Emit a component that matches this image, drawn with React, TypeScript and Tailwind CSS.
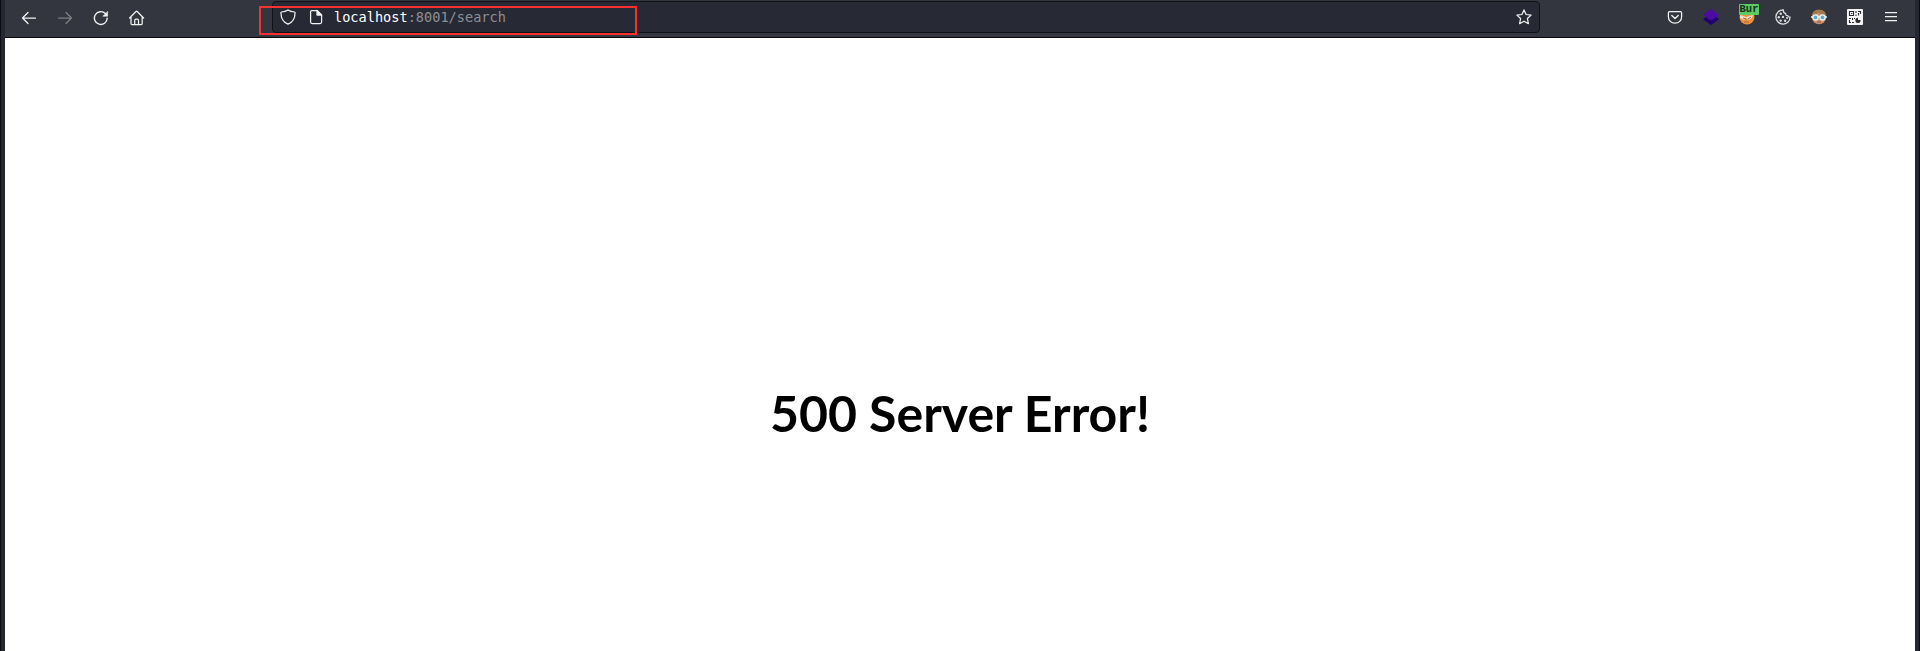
import type { ReactNode } from 'react';

function Slot({ children, label }: { children: ReactNode; label: string }) {
  return (
    <button aria-label={label} className="flex h-full w-9 shrink-0 items-center justify-center">
      {children}
    </button>
  );
}

const line = {
  width: 16,
  height: 16,
  viewBox: '0 0 16 16',
  fill: 'none',
  stroke: '#f2f2f2',
  strokeWidth: 1.25,
  strokeLinecap: 'round' as const,
  strokeLinejoin: 'round' as const,
};

function Toolbar() {
  return (
    <header className="flex h-[38px] shrink-0 border-b border-[#08090c] bg-[#33363e]">
      <nav className="flex h-9 w-[267px] shrink-0 pl-1.5">
        <Slot label="Back">
          <svg {...line}><path d="M14.5 8H1.5M7 2.5L1.5 8L7 13.5" /></svg>
        </Slot>
        <Slot label="Forward">
          <svg {...line} stroke="#7d7f83"><path d="M1.5 8H14.5M9 2.5L14.5 8L9 13.5" /></svg>
        </Slot>
        <Slot label="Reload">
          <svg {...line}>
            <path d="M14.2 8.2A6.4 6.4 0 1 1 12.4 3.6" strokeWidth="1.4" />
            <path d="M14.6 1.7V6.2H10.1Z" fill="#f2f2f2" strokeWidth=".6" />
          </svg>
        </Slot>
        <Slot label="Home">
          <svg {...line} viewBox="0.4 0 16 16">
            <path d="M1 8L7.4 1.5Q8 .9 8.6 1.5L15 8M2.4 7V13.6Q2.4 14.6 3.4 14.6H12.6Q13.6 14.6 13.6 13.6V7M6.1 14.5V10.5Q6.1 9.1 7.3 9.1H8.7Q9.9 9.1 9.9 10.5V14.5" />
          </svg>
        </Slot>
      </nav>

      <div className="relative mt-px flex h-8 w-[1268px] items-center rounded border border-[#101217] bg-[#272935]">
        <svg {...line} className="ml-[7px] shrink-0">
          <path d="M8 .9C6.2 2.2 3.8 2.8 1.5 3C1 3.1.9 3.3.9 3.8C1 8.8 2.7 13.2 8 15.2C13.3 13.2 15 8.8 15.1 3.8C15.1 3.3 15 3.1 14.5 3C12.2 2.8 9.8 2.2 8 .9Z" />
        </svg>
        <svg {...line} className="ml-3 shrink-0">
          <path d="M3.6 1.5H9L13.6 6.1V13Q13.6 14.5 12.1 14.5H4.1Q2.6 14.5 2.6 13V2.5Q2.6 1.5 3.6 1.5Z" />
          <path d="M9 1.5V6H13.6Z" fill="#f2f2f2" />
        </svg>
        <span className="ml-[10px] whitespace-pre pt-[2px] font-['DejaVu_Sans_Mono','Liberation_Mono',monospace] text-[13.6px] leading-none text-[#8d8f96]">
          <span className="text-white">localhost</span>:8001/search
        </span>
        <svg {...line} className="ml-auto mr-[7px] shrink-0">
          <path d="M8 .9L10.1 5.5L15.1 6.1L11.4 9.5L12.4 14.7L8 12.2L3.6 14.7L4.6 9.5L.9 6.1L5.9 5.5Z" />
        </svg>
        <div className="pointer-events-none absolute -left-[14px] top-1 h-[29px] w-[378px] border-2 border-[#f93030]" />
      </div>

      <div className="ml-auto flex h-[34px] pr-1.5">
        <Slot label="Pocket">
          <svg {...line}>
            <path d="M2.5 2.6H13.5Q14.6 2.6 14.6 3.7V7.7C14.6 11.5 11.8 14.2 8 14.2C4.2 14.2 1.4 11.5 1.4 7.7V3.7Q1.4 2.6 2.5 2.6Z" />
            <path d="M4.8 6.6L8 9.6L11.2 6.6" strokeWidth="1.4" />
          </svg>
        </Slot>
        <Slot label="Layers">
          <svg width="16" height="16" viewBox="0 0 16 16">
            <path d="M0 10.3L3 8L8 11L13 8L16 10.3L8 16Z" fill="#1e0073" />
            <path d="M8 0L16 6L8 11.4L0 6Z" fill="#4b0ba5" />
          </svg>
        </Slot>
        <Slot label="Proxy">
          <span className="relative flex h-4 w-4">
            <svg width="16" height="16" viewBox="0 0 16 16">
              <circle cx="8" cy="8" r="7.5" fill="#ed913d" />
              <path d="M1 6L7 8L14 6L13 9L10 11L7 9L5 11L1 9Z" fill="#f3dfc9" />
              <path d="M4 9L7 10M9 10L12 8M5 13L10 13" stroke="#b76632" />
            </svg>
            <span className="absolute -left-[0px] -top-[5px] flex h-[11px] w-5 items-center justify-center rounded-[1px] bg-[#5bcc64] font-['Liberation_Mono',monospace] text-[10.5px] font-bold leading-none text-[#14301a]">Bur</span>
          </span>
        </Slot>
        <Slot label="Cookies">
          <svg {...line} stroke="#dddddf">
            <path d="M8.4.9A7.1 7.1 0 1 0 15.1 8.2C13.9 8.3 13 7.7 12.8 6.6C11.3 6.7 10.5 5.8 10.7 4.5C9.2 4.2 8.2 2.5 8.4.9Z" />
            <g fill="#dddddf" stroke="none"><circle cx="5.7" cy="4.7" r="1.2" /><circle cx="3.8" cy="8.2" r="1.2" /><circle cx="8" cy="7.9" r="1.2" /><circle cx="5.7" cy="11.6" r="1.2" /><circle cx="10.1" cy="11.8" r="1.2" /><circle cx="12" cy="9.1" r="1" /></g>
          </svg>
        </Slot>
        <Slot label="Profile">
          <svg width="16" height="16" viewBox="0 0 16 16">
            <ellipse cx="8" cy="8" rx="7" ry="7.3" fill="#cf8e69" />
            <path d="M1 7C1 2.5 4 .7 8 .7S15 2.5 15 7C11 6.2 8.6 4.8 7 3.5C5.5 5.3 3.4 6.4 1 7Z" fill="#a07a48" />
            <path d="M0 8H16" stroke="#e7f4f4" strokeWidth="1.5" />
            <g fill="#63a9c2" stroke="#e7f4f4" strokeWidth="1.3"><circle cx="4.5" cy="8.4" r="2.6" /><circle cx="11.5" cy="8.4" r="2.6" /></g>
            <path d="M6.3 13H9.7" stroke="#8d4939" />
          </svg>
        </Slot>
        <Slot label="QR code">
          <svg width="16" height="16" viewBox="0 0 16 16">
            <rect width="16" height="16" rx="1" fill="#f4f4f4" />
            <g fill="none" stroke="#282b31" strokeWidth="1.1"><path d="M2.5 2.5H6.5V6.5H2.5ZM4 4.5H5.2M9 2V4M9 5.5V7M11 2.5H13.5V5M11.5 4V6.5M2 9.5H4M5.5 9V11M2.5 11V13.5H4M5 13.5H7M7 9.5H8" /></g>
            <path d="M11 8.8V11H13.5A2.6 2.6 0 1 1 11 8.8Z" fill="#282b31" />
          </svg>
        </Slot>
        <Slot label="Menu">
          <svg {...line} strokeLinecap="butt"><path d="M2 3.6H14M2 7.7H14M2 11.7H14" /></svg>
        </Slot>
      </div>
    </header>
  );
}

export default function App() {
  return (
    <div className="flex h-[651px] w-full flex-col overflow-hidden border-l border-r border-l-[#0b0c12] border-r-[#0b0c12] bg-[#242732] px-1">
      <Toolbar />
      <main className="flex flex-1 justify-center bg-white pt-[345px]">
        <h1 className="whitespace-nowrap font-['Lato',sans-serif] text-[50px] font-bold leading-[60px] text-black">500 Server Error!</h1>
      </main>
    </div>
  );
}
